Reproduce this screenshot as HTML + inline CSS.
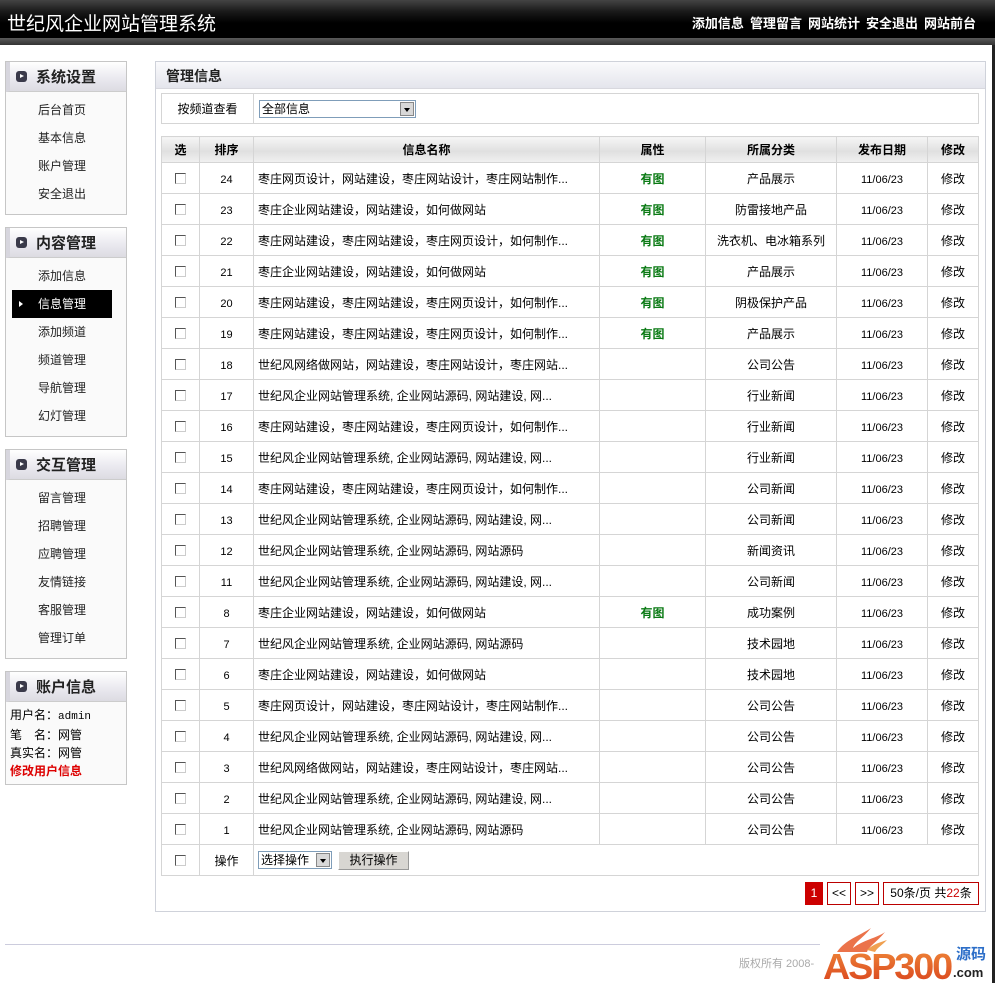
<!DOCTYPE html>
<html><head><meta charset="utf-8">
<style>
*{margin:0;padding:0;box-sizing:border-box}
body{width:995px;height:983px;background:#fff;font-family:"Liberation Sans","Noto Sans CJK SC","WenQuanYi Zen Hei",sans-serif;font-size:12px;color:#000;position:relative;overflow:hidden}
.hd{position:absolute;left:0;top:0;width:995px;height:38px;background:linear-gradient(#444 0%,#1a1a1a 30%,#000 60%,#000 100%)}
.hd2{position:absolute;left:0;top:38px;width:995px;height:7px;background:linear-gradient(#5a5a5a,#333)}
.title{position:absolute;left:7px;top:9px;color:#fff;font-size:19px}
.nav{position:absolute;right:19px;top:13px;color:#fff;font-size:13px;font-weight:bold}
.nav span{margin-left:6px}
.box{position:absolute;left:5px;width:122px;border:1px solid #c6c6c6;background:#fafafa}
.bh{height:30px;border-bottom:1px solid #ccc;background:linear-gradient(#fff,#e9e8ee 60%,#dcdbe2);position:relative;font-size:15px;font-weight:bold;color:#222;padding:4px 0 0 26px;border-left:4px solid #d7d6de}
.bh i{position:absolute;left:6px;top:9px;width:11px;height:11px;border-radius:3px;background:#3a3a4a}
.bh i:after{content:"";position:absolute;left:4px;top:3px;border-left:4px solid #fff;border-top:2.5px solid transparent;border-bottom:2.5px solid transparent}
.it{height:28px;line-height:28px;padding-left:32px;font-size:12px;color:#222;position:relative}
.it.on{background:#000;color:#fff;margin-left:6px;margin-right:14px;padding-left:26px}
.it.on:before{content:"";position:absolute;left:7px;top:11px;border-left:4px solid #fff;border-top:3px solid transparent;border-bottom:3px solid transparent}
.main{position:absolute;left:155px;top:61px;width:831px;height:851px;border:1px solid #cfd2da}
.mt{height:27px;background:linear-gradient(#fafafc,#e4e5ec);border-bottom:1px solid #d8d8de;font-size:14px;font-weight:bold;padding:4px 0 0 10px;color:#222}
table{border-collapse:collapse;position:absolute}
td{border:1px solid #d5d5d5;text-align:center;font-size:12px}
.tb td{height:31px}
.tb tr.h td{height:26px;font-weight:bold;background:linear-gradient(#f5f5f5,#e0e0e0 55%,#f1f1f1)}
.cb{display:inline-block;width:11px;height:11px;border:1px solid #555;border-right-color:#ccc;border-bottom-color:#ccc;background:#fff;vertical-align:middle}
td.n{text-align:left;padding-left:4px}
td.num{font-size:11px;padding-top:3px}
.g{color:#0a7a14;font-weight:bold}
.sel{display:inline-block;border:1px solid #7f9db9;background:#fff;height:18px;position:relative;text-align:left;padding-left:2px;line-height:16px;vertical-align:middle}
.sel b{position:absolute;right:1px;top:1px;width:14px;height:14px;background:#d8d8d8;border:1px solid #888}
.sel b:after{content:"";position:absolute;left:3px;top:5px;border-top:4px solid #000;border-left:3.5px solid transparent;border-right:3.5px solid transparent}
.btn{display:inline-block;width:71px;height:19px;background:#d8d6d2;border:1px solid #999;border-top-color:#fff;border-left-color:#fff;line-height:17px;vertical-align:middle;margin-left:6px}
.pg{position:absolute;top:882px;height:23px;border:1px solid #b00;font-size:12px;text-align:center;line-height:21px}
</style></head><body>
<div class="hd"></div><div class="hd2"></div>
<div class="title">世纪风企业网站管理系统</div>
<div class="nav"><span>添加信息</span><span>管理留言</span><span>网站统计</span><span>安全退出</span><span>网站前台</span></div>

<div class="box" style="top:61px;height:154px"><div class="bh"><i></i>系统设置</div>
<div style="padding-top:4px"><div class="it">后台首页</div><div class="it">基本信息</div><div class="it">账户管理</div><div class="it">安全退出</div></div></div>

<div class="box" style="top:227px;height:210px"><div class="bh"><i></i>内容管理</div>
<div style="padding-top:4px"><div class="it">添加信息</div><div class="it on">信息管理</div><div class="it">添加频道</div><div class="it">频道管理</div><div class="it">导航管理</div><div class="it">幻灯管理</div></div></div>

<div class="box" style="top:449px;height:210px"><div class="bh"><i></i>交互管理</div>
<div style="padding-top:4px"><div class="it">留言管理</div><div class="it">招聘管理</div><div class="it">应聘管理</div><div class="it">友情链接</div><div class="it">客服管理</div><div class="it">管理订单</div></div></div>

<div class="box" style="top:671px;height:114px"><div class="bh"><i></i>账户信息</div>
<div style="padding:4px 0 0 4px;line-height:18px;font-size:12px">用户名：<span style="font-family:'Liberation Mono',monospace;font-size:11px">admin</span><br>笔　名：网管<br>真实名：网管<br><b style="color:#d00">修改用户信息</b></div></div>

<div class="main"><div class="mt">管理信息</div></div>

<table style="left:161px;top:93px;width:818px">
<tr><td style="width:92px;height:30px">按频道查看</td><td style="text-align:left;padding-left:5px"><span class="sel" style="width:157px">全部信息<b></b></span></td></tr></table>

<table class="tb" style="left:161px;top:136px;width:818px">
<tr class="h"><td style="width:38px">选</td><td style="width:54px">排序</td><td style="width:346px">信息名称</td><td style="width:106px">属性</td><td style="width:131px">所属分类</td><td style="width:91px">发布日期</td><td>修改</td></tr>
</table>

<div class="pg" style="left:805px;width:18px;background:#c00;color:#fff;border-color:#c00">1</div>
<div class="pg" style="left:827px;width:24px">&lt;&lt;</div>
<div class="pg" style="left:855px;width:24px">&gt;&gt;</div>
<div class="pg" style="left:883px;width:96px">50条/页 共<span style="color:#c00">22</span>条</div>

<div style="position:absolute;left:5px;top:944px;width:815px;height:1px;background:#ccd"></div>
<div style="position:absolute;left:739px;top:955px;color:#aaa;font-size:11px">版权所有 2008-</div>
<svg style="position:absolute;left:823px;top:926px" width="165" height="57">
<defs><linearGradient id="o" x1="0" y1="0" x2="0" y2="1"><stop offset="0" stop-color="#f08a3a"/><stop offset="1" stop-color="#d8401c"/></linearGradient></defs>
<path d="M14 26 C22 14 36 10 48 2 C40 12 32 16 30 22 C40 14 54 12 62 6 C54 16 46 20 44 26 Z" fill="#e85a2a" opacity="0.85"/>
<path d="M44 24 C50 18 58 16 64 14 C58 20 54 22 52 26 Z" fill="#f0a050"/>
<text x="0" y="53" font-family="Liberation Sans,sans-serif" font-weight="bold" font-size="36" fill="url(#o)" letter-spacing="-2" textLength="128" lengthAdjust="spacingAndGlyphs">ASP300</text>
<text x="133" y="33" font-family="Noto Sans CJK SC,sans-serif" font-weight="bold" font-size="15" fill="#2c6ec8">源码</text>
<text x="130" y="51" font-family="Liberation Sans,sans-serif" font-weight="bold" font-size="13" fill="#222">.com</text>
</svg>
<div style="position:absolute;left:992px;top:45px;width:3px;height:938px;background:#222"></div>
<script>
var d=[[24,"枣庄网页设计，网站建设，枣庄网站设计，枣庄网站制作...",1,"产品展示"],[23,"枣庄企业网站建设，网站建设，如何做网站",1,"防雷接地产品"],[22,"枣庄网站建设，枣庄网站建设，枣庄网页设计，如何制作...",1,"洗衣机、电冰箱系列"],[21,"枣庄企业网站建设，网站建设，如何做网站",1,"产品展示"],[20,"枣庄网站建设，枣庄网站建设，枣庄网页设计，如何制作...",1,"阴极保护产品"],[19,"枣庄网站建设，枣庄网站建设，枣庄网页设计，如何制作...",1,"产品展示"],[18,"世纪风网络做网站，网站建设，枣庄网站设计，枣庄网站...",0,"公司公告"],[17,"世纪风企业网站管理系统, 企业网站源码, 网站建设, 网...",0,"行业新闻"],[16,"枣庄网站建设，枣庄网站建设，枣庄网页设计，如何制作...",0,"行业新闻"],[15,"世纪风企业网站管理系统, 企业网站源码, 网站建设, 网...",0,"行业新闻"],[14,"枣庄网站建设，枣庄网站建设，枣庄网页设计，如何制作...",0,"公司新闻"],[13,"世纪风企业网站管理系统, 企业网站源码, 网站建设, 网...",0,"公司新闻"],[12,"世纪风企业网站管理系统, 企业网站源码, 网站源码",0,"新闻资讯"],[11,"世纪风企业网站管理系统, 企业网站源码, 网站建设, 网...",0,"公司新闻"],[8,"枣庄企业网站建设，网站建设，如何做网站",1,"成功案例"],[7,"世纪风企业网站管理系统, 企业网站源码, 网站源码",0,"技术园地"],[6,"枣庄企业网站建设，网站建设，如何做网站",0,"技术园地"],[5,"枣庄网页设计，网站建设，枣庄网站设计，枣庄网站制作...",0,"公司公告"],[4,"世纪风企业网站管理系统, 企业网站源码, 网站建设, 网...",0,"公司公告"],[3,"世纪风网络做网站，网站建设，枣庄网站设计，枣庄网站...",0,"公司公告"],[2,"世纪风企业网站管理系统, 企业网站源码, 网站建设, 网...",0,"公司公告"],[1,"世纪风企业网站管理系统, 企业网站源码, 网站源码",0,"公司公告"]];
var h="";d.forEach(function(r){h+='<tr><td><span class="cb"></span></td><td class="num">'+r[0]+'</td><td class="n">'+r[1]+'</td><td class="g">'+(r[2]?"有图":"")+'</td><td>'+r[3]+'</td><td class="num">11/06/23</td><td>修改</td></tr>';});
h+='<tr><td><span class="cb"></span></td><td>操作</td><td colspan="5" class="n"><span class="sel" style="width:74px">选择操作<b></b></span><span class="btn" style="text-align:center">执行操作</span></td></tr>';
document.querySelector(".tb tbody").insertAdjacentHTML("beforeend",h);
</script>
</body></html>
